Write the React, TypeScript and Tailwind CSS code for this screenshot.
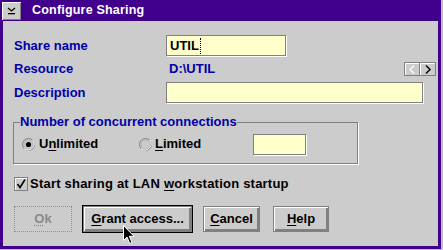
import React from "react";

const font = { fontFamily: '"Liberation Sans", Arial, sans-serif' };

function U({ children }: { children: React.ReactNode }) {
  return <span className="underline underline-offset-[2px] decoration-[1px]">{children}</span>;
}

function Radio({ checked }: { checked?: boolean }) {
  return (
    <svg width="13" height="13" viewBox="0 0 13 13" className="shrink-0">
      <circle cx="6.5" cy="6.5" r="6" fill="#cccccc" stroke="#808080" strokeWidth="1" />
      <path d="M2.3 10.7 A6 6 0 0 0 10.7 2.3" fill="none" stroke="#ffffff" strokeWidth="1" />
      <circle cx="6.5" cy="6.5" r="4.5" fill="#cccccc" stroke="#a0a0a0" strokeWidth="0.6" />
      {checked && <circle cx="6.5" cy="6.5" r="2.6" fill="#000" />}
    </svg>
  );
}

function Btn({
  children,
  w,
  isDefault,
  className = "",
}: {
  children: React.ReactNode;
  w: string;
  isDefault?: boolean;
  className?: string;
}) {
  const inner = (
    <div className="flex h-[26px] items-center justify-center border border-[#808080] bg-[#cccccc] shadow-[inset_1px_1px_0_#ffffff,inset_-1px_-1px_0_#808080,inset_-2px_-2px_0_#808080] text-[13px] font-bold text-black">
      {children}
    </div>
  );
  if (isDefault) {
    return <div className={`${w} border border-black ${className}`}>{inner}</div>;
  }
  return <div className={`${w} ${className}`}>{inner}</div>;
}

export default function App() {
  return (
    <div className="w-[443px] h-[250px] bg-[#c0c0c0] overflow-hidden" style={font}>
      <div className="relative flex h-[249px] w-[441px] flex-col bg-[#40008c] px-[3px] pb-[3px]">
        {/* Title bar */}
        <div className="flex h-[21px] shrink-0 items-center">
          <div className="ml-[-1px] flex h-[18px] w-[19px] items-center justify-center bg-[#cccccc] shadow-[inset_1px_1px_0_#ffffff,inset_-1px_-1px_0_#808080]">
            <svg width="9" height="8" viewBox="0 0 9 8">
              <path d="M1 1 L4.5 4 L8 1" fill="none" stroke="#000" strokeWidth="1.2" />
              <rect x="1" y="6" width="7" height="1.3" fill="#000" />
            </svg>
          </div>
          <div className="ml-[11px] text-[12.5px] font-bold tracking-[0.2px] text-white">Configure Sharing</div>
        </div>

        {/* Body */}
        <div className="relative flex flex-1 flex-col bg-[#cccccc] pl-[11px] pr-[2px]">
          {/* Row 1 */}
          <div className="mt-[14px] flex h-[21px] items-center">
            <div className="w-[152px] text-[13px] font-bold text-[#0000aa]">Share name</div>
            <div className="flex h-[21px] w-[120px] items-center border border-[#808080] bg-[#ffffcc] pl-[3px] shadow-[1px_1px_0_#ffffff] text-[13px] font-bold text-black">
              UTIL
              <span className="ml-[1px] h-[16px] border-l border-dotted border-black" />
            </div>
          </div>

          {/* Row 2 */}
          <div className="flex h-[26px] items-center">
            <div className="w-[152px] text-[13px] font-bold text-[#0000aa]">Resource</div>
            <div className="pl-[3px] text-[13px] font-bold text-[#0000aa]">D:\UTIL</div>
            <div className="flex-1" />
            <div className="flex h-[14px]">
              <div className="flex h-[14px] w-[16px] items-center justify-center border border-[#808080] bg-[#cccccc] shadow-[inset_1px_1px_0_#ffffff]">
                <svg width="6" height="9" viewBox="0 0 6 9">
                  <path d="M5 0.5 L1 4.5 L5 8.5" fill="none" stroke="#ffffff" strokeWidth="1.2" />
                </svg>
              </div>
              <div className="flex h-[14px] w-[16px] items-center justify-center border border-l-0 border-[#808080] bg-[#cccccc] shadow-[inset_1px_1px_0_#ffffff]">
                <svg width="6" height="9" viewBox="0 0 6 9">
                  <path d="M1 0.5 L5 4.5 L1 8.5" fill="none" stroke="#000" strokeWidth="1.4" />
                </svg>
              </div>
            </div>
          </div>

          {/* Row 3 */}
          <div className="flex h-[21px] items-center">
            <div className="w-[152px] text-[13px] font-bold text-[#0000aa]">Description</div>
            <div className="h-[21px] w-[257px] border border-[#808080] bg-[#ffffcc] shadow-[1px_1px_0_#ffffff]" />
          </div>

          {/* Group box */}
          <fieldset className="ml-[-1px] mt-[11px] h-[50px] w-[345px] border border-[#808080] pl-[6px] shadow-[1px_1px_0_#ffffff]">
            <legend className="px-0 text-[13px] font-bold leading-[16px] text-[#0000aa]">
              Number of concurrent connections
            </legend>
            <div className="mt-[3px] flex h-[22px] items-center pl-[2px]">
              <div className="flex w-[117px] items-center gap-[4px] text-[13px] font-bold text-black">
                <Radio checked />
                <span>
                  U<U>n</U>limited
                </span>
              </div>
              <div className="flex w-[114px] items-center gap-[3px] text-[13px] font-bold text-black">
                <Radio />
                <span>
                  <U>L</U>imited
                </span>
              </div>
              <div className="h-[21px] w-[53px] border border-[#808080] bg-[#ffffcc] shadow-[1px_1px_0_#ffffff]" />
            </div>
          </fieldset>

          {/* Checkbox */}
          <div className="mt-[12px] flex h-[16px] items-center">
            <div className="flex h-[14px] w-[14px] items-center justify-center border border-[#808080] bg-[#cccccc] shadow-[inset_1px_1px_0_#ffffff]">
              <svg width="10" height="10" viewBox="0 0 10 10">
                <path d="M1.5 5 L4 8.5 L9 0.5" fill="none" stroke="#000" strokeWidth="1.6" />
              </svg>
            </div>
            <div className="ml-[2px] text-[13px] font-bold tracking-[0.22px] text-black">
              Start sharing at LAN <U>w</U>orkstation startup
            </div>
          </div>

          {/* Buttons */}
          <div className="mt-[13px] flex h-[28px] items-center">
            <div className="flex h-[26px] w-[58px] items-center justify-center border border-dotted border-[#909090] text-[13px] font-bold text-[#8a8a8a]">
              <span className="underline decoration-dotted underline-offset-[2px]">O</span>k
            </div>
            <Btn w="w-[111px]" isDefault className="ml-[10px]">
              <span>
                <U>G</U>rant access...
              </span>
            </Btn>
            <Btn w="w-[57px]" className="ml-[10px]">
              <span>
                <U>C</U>ancel
              </span>
            </Btn>
            <Btn w="w-[56px]" className="ml-[13px]">
              <span>
                <U>H</U>elp
              </span>
            </Btn>
          </div>

          {/* Mouse cursor */}
          <svg
            className="absolute left-[120px] top-[204px]"
            width="13"
            height="20"
            viewBox="0 0 13 20"
          >
            <path
              d="M0.5 0.5 L0.5 15.5 L4 12 L6.8 18.5 L9 17.5 L6.3 11.3 L11 11.3 Z"
              fill="#000"
              stroke="#fff"
              strokeWidth="1"
            />
          </svg>
        </div>
      </div>
    </div>
  );
}
